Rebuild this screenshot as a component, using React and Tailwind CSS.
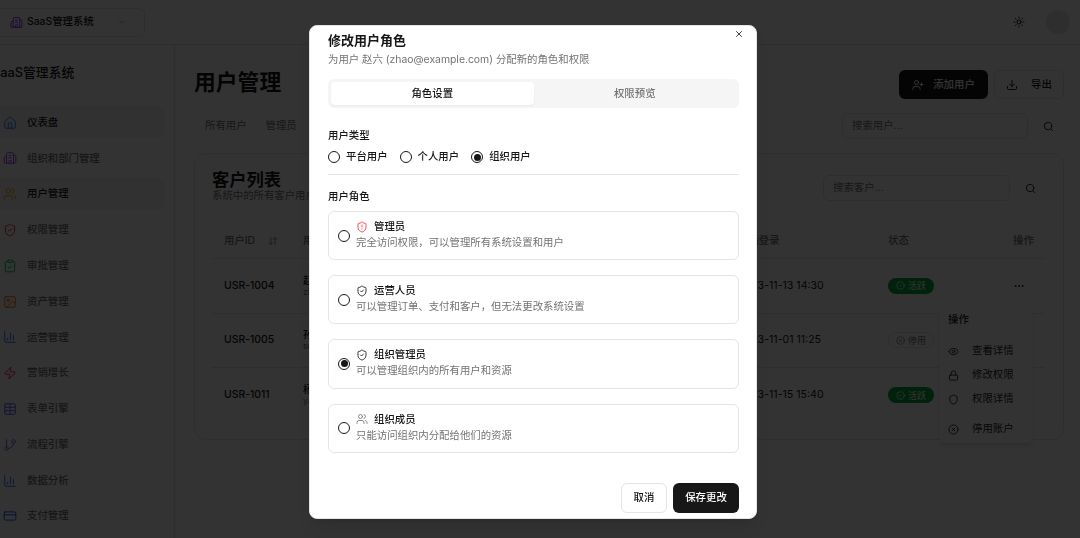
import React from "react";
import {
  House, Building2, Users, ShieldCheck, ClipboardCheck, Image, ChartColumn, Zap, Table, GitBranch, CreditCard,
  Sun, UserPlus, Download, Search, ArrowDownUp, Ellipsis, Eye, Lock, Shield, CircleX, CircleCheck, X, ShieldAlert, ChevronDown,
} from "lucide-react";

const nav = [
  { label: "仪表盘", Icon: House, color: "text-blue-500", active: true },
  { label: "组织和部门管理", Icon: Building2, color: "text-purple-500" },
  { label: "用户管理", Icon: Users, color: "text-amber-500", active: true },
  { label: "权限管理", Icon: ShieldCheck, color: "text-red-500" },
  { label: "审批管理", Icon: ClipboardCheck, color: "text-green-500" },
  { label: "资产管理", Icon: Image, color: "text-orange-500" },
  { label: "运营管理", Icon: ChartColumn, color: "text-blue-500" },
  { label: "营销增长", Icon: Zap, color: "text-rose-500" },
  { label: "表单引擎", Icon: Table, color: "text-indigo-500" },
  { label: "流程引擎", Icon: GitBranch, color: "text-violet-500" },
  { label: "数据分析", Icon: ChartColumn, color: "text-blue-500" },
  { label: "支付管理", Icon: CreditCard, color: "text-blue-600" },
];

const rows = [
  { id: "USR-1004", name: "赵六", mail: "zhao@example.com", date: "2023-11-13 14:30", on: true },
  { id: "USR-1005", name: "孙七", mail: "sun@example.com", date: "2023-11-01 11:25", on: false },
  { id: "USR-1011", name: "杨十", mail: "yang@example.com", date: "2023-11-15 15:40", on: true },
];

const roles = [
  { title: "管理员", desc: "完全访问权限，可以管理所有系统设置和用户", Icon: ShieldAlert, color: "text-red-500" },
  { title: "运营人员", desc: "可以管理订单、支付和客户，但无法更改系统设置", Icon: ShieldCheck, color: "text-neutral-900" },
  { title: "组织管理员", desc: "可以管理组织内的所有用户和资源", Icon: ShieldCheck, color: "text-neutral-900", checked: true },
  { title: "组织成员", desc: "只能访问组织内分配给他们的资源", Icon: Users, color: "text-neutral-500" },
];

function Radio({ checked }) {
  return (
    <span className="flex h-[12px] w-[12px] shrink-0 items-center justify-center rounded-full border border-neutral-900">
      {checked && <span className="h-[7px] w-[7px] rounded-full bg-neutral-900" />}
    </span>
  );
}

function Page() {
  return (
    <div className="flex h-full w-full flex-col bg-white text-neutral-900">
      <header className="flex h-[45px] shrink-0 items-center justify-between border-b border-neutral-200 pr-[10px]">
        <div className="ml-[-10px] flex h-[29px] w-[155px] items-center rounded-md border border-neutral-200 pl-[19px] pr-[12px]">
          <Building2 className="h-[13px] w-[13px] text-purple-500" />
          <span className="ml-[4px] text-[10.4px] font-medium">SaaS管理系统</span>
          <ChevronDown className="ml-auto mr-[5px] h-[10px] w-[10px] text-neutral-400" />
        </div>
        <div className="flex items-center gap-[21px]">
          <Sun className="h-[12px] w-[12px]" />
          <span className="h-[24px] w-[24px] rounded-full bg-neutral-200" />
        </div>
      </header>
      <div className="flex min-h-0 flex-1">
        <aside className="w-[175px] shrink-0 border-r border-neutral-200">
          <div className="ml-[-8px] flex h-[61px] items-center pb-[6px] text-[12.8px] font-medium">SaaS管理系统</div>
          <nav className="ml-[-10px] flex w-[175px] flex-col gap-[3.4px]">
            {nav.map(({ label, Icon, color, active }) => (
              <div key={label} className={`flex h-[32.4px] items-center gap-[10px] rounded-lg pl-[13px] pt-[1px] text-[10.4px] font-medium ${active ? "bg-neutral-100" : "text-neutral-500"}`}>
                <Icon className={`h-[14px] w-[14px] ${color}`} strokeWidth={1.7} />
                <span>{label}</span>
              </div>
            ))}
          </nav>
        </aside>
        <main className="min-w-0 flex-1 pl-[19px] pr-[16px] pt-[25px]">
          <div className="flex h-[29px] items-center justify-between">
            <h1 className="pb-[4px] text-[21.8px] font-bold">用户管理</h1>
            <div className="flex gap-[6px]">
              <button className="flex h-[29px] w-[89px] items-center justify-center gap-[9px] rounded-md bg-neutral-900 text-[10.4px] font-medium text-white">
                <UserPlus className="h-[12px] w-[12px]" />添加用户
              </button>
              <button className="flex h-[29px] w-[70px] items-center justify-center gap-[13px] rounded-md border border-neutral-200 text-[10.4px] font-medium">
                <Download className="h-[12px] w-[12px]" />导出
              </button>
            </div>
          </div>
          <div className="mt-[14px] flex h-[26px] items-center justify-between">
            <div className="flex h-[26px] gap-[19px] rounded-md pl-[11px] text-[10.4px] leading-[26px] text-neutral-500">
              <span>所有用户</span><span>管理员</span>
            </div>
            <div className="flex items-center">
              <div className="flex h-[26px] w-[186px] items-center rounded-md border border-neutral-200 pl-[9px] text-[10.4px] text-neutral-500">搜索用户...</div>
              <Search className="ml-[15px] mr-[10px] h-[11px] w-[11px]" />
            </div>
          </div>
          <section className="mt-[14px] h-[287px] rounded-xl border border-neutral-200 pl-[17px] pr-[18px]">
            <div className="flex h-[72px] items-start justify-between pt-[16px]">
              <div>
                <h2 className="text-[17.3px] font-bold leading-[20px]">客户列表</h2>
                <p className="text-[10.4px] leading-[12px] text-neutral-500">系统中的所有客户用户</p>
              </div>
              <div className="mt-[5px] flex items-center">
                <div className="flex h-[26px] w-[187px] items-center rounded-md border border-neutral-200 pl-[9px] text-[10.4px] text-neutral-500">搜索客户...</div>
                <Search className="ml-[15px] mr-[9px] h-[11px] w-[11px]" />
              </div>
            </div>
            <div className="flex h-[33px] items-center border-b border-neutral-200 pb-[2px] pl-[12px] text-[10.4px] font-medium text-neutral-500">
              <span className="flex w-[79px] items-center gap-[13px]">用户ID<ArrowDownUp className="h-[10px] w-[10px]" /></span>
              <span className="w-[435px]">用户</span>
              <span className="w-[150px]">最后登录</span>
              <span className="w-[125px]">状态</span>
              <span>操作</span>
            </div>
            {rows.map((r, i) => (
              <div key={r.id} className={`flex h-[54.5px] items-center pl-[12px] text-[10.4px] ${i < 2 ? "border-b border-neutral-200" : ""}`}>
                <span className="w-[79px] font-medium">{r.id}</span>
                <span className="w-[435px]">
                  <span className="block font-medium leading-[13px]">{r.name}</span>
                  <span className="block text-[8.5px] leading-[11px] text-neutral-500">{r.mail}</span>
                </span>
                <span className="w-[150px] text-[10.6px] whitespace-nowrap">{r.date}</span>
                <span className="w-[125px]">
                  {r.on ? (
                    <span className="flex h-[16px] w-[46px] items-center justify-center gap-[3px] rounded-full bg-green-600 text-[9px] text-white">
                      <CircleCheck className="h-[9px] w-[9px]" />活跃
                    </span>
                  ) : (
                    <span className="flex h-[16px] w-[46px] items-center justify-center gap-[3px] rounded-full border border-neutral-200 text-[9px] text-neutral-500">
                      <CircleX className="h-[9px] w-[9px]" />停用
                    </span>
                  )}
                </span>
                {i === 0 && <Ellipsis className="h-[12px] w-[12px]" />}
              </div>
            ))}
          </section>
        </main>
      </div>
    </div>
  );
}

function RowMenu() {
  const items = [
    { label: "查看详情", Icon: Eye, cls: "mt-[11px]" },
    { label: "修改权限", Icon: Lock, cls: "" },
    { label: "权限详情", Icon: Shield, cls: "" },
    { label: "停用账户", Icon: CircleX, cls: "mt-[6px]" },
  ];
  return (
    <div className="absolute left-[939px] top-[305px] h-[138px] w-[94px] rounded-md bg-white py-[6px] pl-[9px] pt-[7px] text-[10.4px] text-neutral-800 shadow-md">
      <div className="flex h-[16px] items-center font-medium">操作</div>
      {items.map(({ label, Icon, cls }) => (
        <div key={label} className={`flex h-[24px] items-center gap-[13px] ${cls}`}>
          <Icon className="h-[11px] w-[11px]" />
          <span>{label}</span>
        </div>
      ))}
    </div>
  );
}

function Modal() {
  return (
    <div className="absolute left-[309px] top-[25px] flex h-[494px] w-[448px] flex-col rounded-lg border border-neutral-200 bg-white pl-[18px] pr-[17px] pt-[5px] text-neutral-900 shadow-lg">
      <X className="absolute right-[12px] top-[3px] h-[10px] w-[10px] text-neutral-700" strokeWidth={2.4} />
      <h2 className="text-[13px] font-bold leading-[18px]">修改用户角色</h2>
      <p className="mt-[3px] text-[10.4px] leading-[15px] text-neutral-500">为用户 赵六 (zhao@example.com) 分配新的角色和权限</p>
      <div className="mt-[12px] flex h-[29px] rounded-md bg-neutral-100 p-[3px] text-[10.4px] font-medium">
        <div className="flex flex-1 items-center justify-center rounded-[4px] bg-white shadow-xs">角色设置</div>
        <div className="flex flex-1 items-center justify-center text-neutral-500">权限预览</div>
      </div>
      <div className="mt-[21px] text-[10.4px] font-medium leading-[14px]">用户类型</div>
      <div className="mt-[7px] flex h-[14px] items-center gap-[12px] text-[10.4px] font-medium">
        {["平台用户", "个人用户", "组织用户"].map((t, i) => (
          <label key={t} className="flex items-center gap-[6px]">
            <Radio checked={i === 2} />
            <span>{t}</span>
          </label>
        ))}
      </div>
      <div className="mt-[10px] border-t border-neutral-200" />
      <div className="mt-[15px] text-[10.4px] font-medium leading-[14px]">用户角色</div>
      <div className="mt-[7px] flex flex-col gap-[15px]">
        {roles.map(({ title, desc, Icon, color, checked }) => (
          <div key={title} className="flex h-[49.2px] items-center gap-[6px] rounded-md border border-neutral-200 pb-[2px] pl-[9px]">
            <span className="mt-[2px]"><Radio checked={checked} /></span>
            <div>
              <div className="flex items-center gap-[6px] text-[10.4px] font-medium leading-[15px]">
                <Icon className={`h-[12px] w-[12px] ${color}`} strokeWidth={1.7} />
                <span>{title}</span>
              </div>
              <p className="mt-[1px] text-[10.4px] leading-[15px] text-neutral-500">{desc}</p>
            </div>
          </div>
        ))}
      </div>
      <div className="mt-[30px] flex justify-end gap-[6px] text-[10.4px] font-medium">
        <button className="h-[30px] w-[46px] rounded-md border border-neutral-200">取消</button>
        <button className="h-[30px] w-[66px] rounded-md bg-neutral-900 text-white">保存更改</button>
      </div>
    </div>
  );
}

export default function App() {
  return (
    <div className="relative h-[538px] w-[1080px] overflow-hidden font-[Inter,'Noto_Sans_CJK_SC',sans-serif]">
      <Page />
      <RowMenu />
      <div className="absolute inset-0 bg-black/80 backdrop-blur-[0.5px]" />
      <Modal />
    </div>
  );
}
